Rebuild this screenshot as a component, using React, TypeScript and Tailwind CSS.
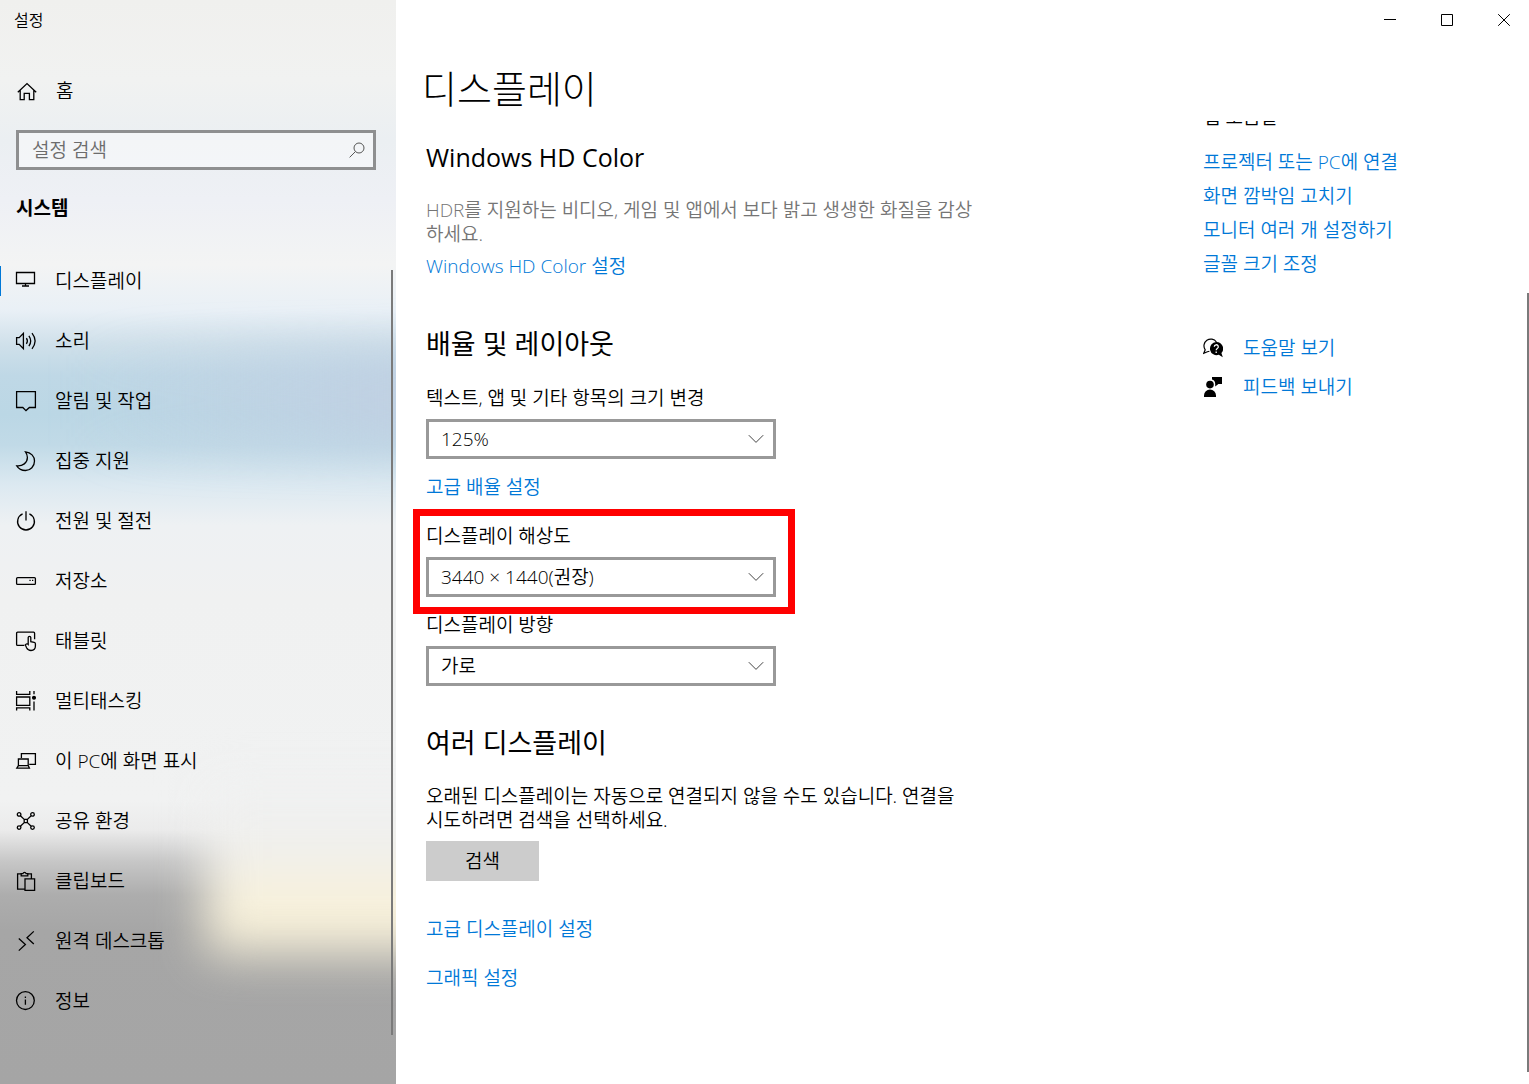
import type { ReactNode } from 'react';

interface NavItem { label: string; icon: ReactNode }

const NAV: NavItem[] = [
  {
    label: '디스플레이',
    icon: <path d="M.5 1.5h18v11H.5zM9.5 12.5v2M6 15h7" />,
  },
  {
    label: '소리',
    icon: <path d="M.6 6.6h2.6L7.4 2.4v15.2L3.2 13.4H.6zM10.4 7.2q2 2.8 0 5.6M12.9 4.8q3.6 5.2 0 10.4M16 2.2q6.2 7.8 0 15.6" />,
  },
  {
    label: '알림 및 작업',
    icon: <path d="M.6.6h18.8v15.9h-6L10 19.6l-3.2-3.1H.6z" />,
  },
  {
    label: '집중 지원',
    icon: <path d="M9.5.8C15 1.4 18.5 5.4 18.5 10c0 5.4-4 9.5-9 9.5-3.6 0-7-1.9-8.7-4.7C6.6 15.4 11.4 11.8 11.4 6.6c0-2.2-.7-4.1-1.9-5.8z" />,
  },
  {
    label: '전원 및 절전',
    icon: <path d="M10 .2v9.4M6.6 2.9a8.4 8.4 0 1 0 6.8 0" />,
  },
  {
    label: '저장소',
    icon: (
      <>
        <rect x=".6" y="6.6" width="18.8" height="6.8" rx="1" />
        <path d="M13.4 9.4h1.3M16 9.4h1.3" />
      </>
    ),
  },
  {
    label: '태블릿',
    icon: (
      <>
        <path d="M8.4 14.4H1.6a1 1 0 0 1-1-1V2.2a1 1 0 0 1 1-1h16a1 1 0 0 1 1 1v6" />
        <path d="M12.2 13.4V6.6a1.3 1.3 0 0 1 2.6 0v4l3.4.7a1.5 1.5 0 0 1 1.2 1.5v2.3c0 2.6-1.9 4.4-4.4 4.4-2.2 0-3.5-1-4.4-2.8l-1.3-2.8c.9-1.3 2.2-1.2 2.9-.5z" />
      </>
    ),
  },
  {
    label: '멀티태스킹',
    icon: (
      <>
        <path d="M.6 0v3.3h13.2V0M.6 6h13.2v8.4H.6zM.6 19.4v-2.6h13.2v2.6M18 0v3.2M18 10.4v9" />
        <circle cx="18" cy="6.8" r="1.4" fill="currentColor" />
      </>
    ),
  },
  {
    label: '이 PC에 화면 표시',
    icon: <path d="M5.4 7V2.6h14v10.8h-6.2M2.4 8h9.8v6.6H2.4zM2.4 14.6L.8 17.2h12.6l-1.2-2.6" />,
  },
  {
    label: '공유 환경',
    icon: (
      <>
        <circle cx="3.1" cy="3.4" r="1.8" />
        <circle cx="16.5" cy="3.4" r="1.8" />
        <circle cx="3.1" cy="16.6" r="1.8" />
        <circle cx="16.5" cy="16.6" r="1.8" />
        <path d="M8.2 8.4h3.2v3.2H8.2zM4.4 4.7l3.8 3.7M15.2 4.7l-3.8 3.7M4.4 15.3l3.8-3.7M15.2 15.3l-3.8-3.7" />
      </>
    ),
  },
  {
    label: '클립보드',
    icon: <path d="M8.4 18.2H1.6V2.8h3.6M11.8 2.8h3.6v4.6M5.2 4.8V2.6h1.7a1.7 1.7 0 0 1 3.2 0h1.7v2.2zM9 7.8h9.6v11.6H9z" />,
  },
  {
    label: '원격 데스크톱',
    icon: <path d="M2.8 7.4l6.6 6-6.6 6.2M17.8.4L11 6.8l6.8 6.2" />,
  },
  {
    label: '정보',
    icon: (
      <>
        <circle cx="9.4" cy="9.6" r="8.9" />
        <path d="M9.4 8.4v5.4M9.4 5.6v1.4" />
      </>
    ),
  },
];

const HELP_LINKS = [
  '프로젝터 또는 PC에 연결',
  '화면 깜박임 고치기',
  '모니터 여러 개 설정하기',
  '글꼴 크기 조정',
];

function Icon({ children }: { children: ReactNode }) {
  return (
    <svg
      viewBox="0 0 20 20"
      className="h-5 w-5 shrink-0 overflow-visible"
      fill="none"
      stroke="currentColor"
      strokeWidth="1.3"
      aria-hidden="true"
    >
      {children}
    </svg>
  );
}

function TextLink({ children, className = '' }: { children: ReactNode; className?: string }) {
  return (
    <a href="#" className={`block w-fit leading-6 text-[#0078d7] hover:text-gray-500 ${className}`}>
      {children}
    </a>
  );
}

interface SelectProps { id: string; label: string; value: string }

function SelectField({ id, label, value }: SelectProps) {
  return (
    <div className="flex w-[350px] flex-col gap-[9px]">
      <label htmlFor={id} className="leading-6">{label}</label>
      <div className="relative">
        <select
          id={id}
          defaultValue={value}
          className="block h-10 w-full appearance-none border-3 border-[#999999] bg-white px-3 outline-none"
        >
          <option>{value}</option>
        </select>
        <svg
          viewBox="0 0 16 10"
          className="pointer-events-none absolute top-[15px] right-3 h-[10px] w-4"
          fill="none"
          stroke="#444"
          strokeWidth="1"
          aria-hidden="true"
        >
          <path d="M.8 1.2L8 8.4l7.2-7.2" />
        </svg>
      </div>
    </div>
  );
}

// Blurred desktop showing through the side panel
function Backdrop() {
  return (
    <div className="absolute inset-0 -z-10 overflow-hidden bg-[linear-gradient(#f0f0ee_0px,#f1f2f1_80px,#ebeff2_140px,#eef0f5_200px,#f3f4f4_265px,#e9f0f6_310px,#cfe0ea_345px,#bfd8e6_375px,#bbd7e5_415px,#c1dae7_445px,#dce9f1_485px,#eef1f3_525px,#f0f1f1_600px,#f1f2f2_800px,#ebebeb_830px,#c6c6c6_862px,#adadad_895px,#a6a6a6_930px,#a5a5a5_1084px)]">
      <div className="absolute top-[355px] -right-16 h-[90px] w-[380px] bg-linear-to-r from-transparent to-[#c1cfe2] blur-xl" />
      <div className="absolute top-[785px] -right-16 h-[168px] w-[254px] bg-[linear-gradient(#f0f1f1_0px,#efefed_65px,#f8f1da_115px,#f6efd8_168px)] blur-xl" />
    </div>
  );
}

function Sidebar() {
  return (
    <aside className="relative isolate flex w-[396px] shrink-0 flex-col">
      <Backdrop />
      <div className="flex h-10 items-center pl-[14px] text-base">설정</div>

      <a href="#" className="mt-[26px] flex h-[50px] items-center gap-5 pl-4">
        <Icon>
          <path d="M1.8 11.2L11 2.6l9.2 8.6M4.2 9.4v9.2h4v-6.2h5.2v6.2h4.4V9.4" />
        </Icon>
        홈
      </a>

      <div className="relative mx-4 mt-[14px] mr-5">
        <input
          type="search"
          aria-label="설정 검색"
          placeholder="설정 검색"
          className="block h-10 w-full appearance-none border-3 border-[#8e8f90] bg-white/40 pr-10 pl-[13px] outline-none placeholder:text-[#6c6c6c]"
        />
        <svg
          viewBox="0 0 16 16"
          className="pointer-events-none absolute top-3 right-[11px] h-4 w-4"
          fill="none"
          stroke="#555"
          strokeWidth="1"
          aria-hidden="true"
        >
          <circle cx="10" cy="6" r="5" />
          <path d="M6.4 9.6L.6 15.4" />
        </svg>
      </div>

      <h2 className="mt-[23px] pl-4 leading-[30px] font-bold">시스템</h2>

      <div className="mt-7 flex">
        <nav className="flex-1">
          {NAV.map((item, i) => (
            <a key={item.label} href="#" className="flex h-[60px] items-center">
              <span className={i === 0 ? 'h-[30px] w-px bg-[#0078d7]' : 'w-px'} />
              <span className="flex items-center gap-[19px] pl-[15px]">
                <Icon>{item.icon}</Icon>
                {item.label}
              </span>
            </a>
          ))}
        </nav>
        <div className="mt-[19px] mr-[3px] -mb-1 w-[2px] bg-[#7a7a7a]" />
      </div>
    </aside>
  );
}

function WindowControls() {
  return (
    <div className="flex h-10 justify-end gap-[7px]">
      <button type="button" aria-label="최소화" className="flex w-[50px] items-center justify-center">
        <svg viewBox="0 0 12 12" className="h-3 w-3" stroke="#000" aria-hidden="true">
          <path d="M0 5.5h12" />
        </svg>
      </button>
      <button type="button" aria-label="최대화" className="flex w-[50px] items-center justify-center">
        <svg viewBox="0 0 12 12" className="h-3 w-3" fill="none" stroke="#000" aria-hidden="true">
          <path d="M.5.5h11v11H.5z" />
        </svg>
      </button>
      <button type="button" aria-label="닫기" className="flex w-[50px] items-center justify-center">
        <svg viewBox="0 0 12 12" className="h-3 w-3" stroke="#000" aria-hidden="true">
          <path d="M.2.2l11.6 11.6M11.8.2L.2 11.8" />
        </svg>
      </button>
    </div>
  );
}

function RelatedLinks() {
  return (
    <aside className="w-[324px] shrink-0">
      {/* heading is scrolled almost out of view */}
      <div className="flex h-[6px] items-end overflow-hidden">
        <h2 className="leading-5">앱 도움말</h2>
      </div>
      <ul className="mt-[18px]">
        {HELP_LINKS.map(text => (
          <li key={text} className="flex h-[34px] items-center">
            <TextLink>{text}</TextLink>
          </li>
        ))}
      </ul>
      <ul className="mt-[47px]">
        <li className="flex h-[39px] items-center gap-5">
          <svg viewBox="0 0 20 20" className="h-5 w-5" aria-hidden="true">
            <path
              d="M6.4 13.2l-2 .6-3.6 1.4 1.4-3.4A6.4 6.4 0 1 1 13.4 4"
              fill="none"
              stroke="#000"
              strokeWidth="1.2"
            />
            <path d="M13.2 4a6.6 6.6 0 1 0 2.6 12.8l4 2.4-1.4-4.2A6.6 6.6 0 0 0 13.2 4z" fill="#000" />
            <path
              d="M11.3 8.8a2 2 0 1 1 3 1.7c-.8.5-1.1.8-1.1 1.7M13.2 13.4v1.5"
              fill="none"
              stroke="#fff"
              strokeWidth="1.3"
            />
          </svg>
          <TextLink>도움말 보기</TextLink>
        </li>
        <li className="flex h-[39px] items-center gap-5">
          <svg viewBox="0 0 20 20" className="h-5 w-5" aria-hidden="true">
            <circle cx="7" cy="7.6" r="3.8" />
            <path d="M1 20v-1.6a6 6 0 0 1 12 0V20zM9 0h10v7h-3.6l-3.2 2.4V7C12.2 4.6 11 3 9 2.6z" />
          </svg>
          <TextLink>피드백 보내기</TextLink>
        </li>
      </ul>
    </aside>
  );
}

export default function App() {
  return (
    <div className="flex min-h-screen bg-white font-['Open_Sans','Noto_Sans_CJK_KR',sans-serif] text-[19px] font-[350] text-black">
      <Sidebar />

      <div className="flex min-w-0 flex-1 flex-col">
        <WindowControls />
        <h1 className="mt-[23px] pl-[26px] text-[38px] leading-[50px] font-light">디스플레이</h1>

        <div className="mt-2 flex flex-1">
          <main className="flex-1 pt-[18px] pr-8 pb-6 pl-[30px]">
            <section>
              <h2 className="text-[25px] leading-9 font-normal">Windows HD Color</h2>
              <p className="mt-[23px] max-w-[560px] leading-6 break-all text-[#757575]">
                HDR를 지원하는 비디오, 게임 및 앱에서 보다 밝고 생생한 화질을 감상하세요.
              </p>
              <TextLink className="mt-2">Windows HD Color 설정</TextLink>
            </section>

            <section className="mt-12">
              <h2 className="mb-6 text-[27px] leading-9 font-normal">배율 및 레이아웃</h2>
              <SelectField id="scale" label="텍스트, 앱 및 기타 항목의 크기 변경" value="125%" />
              <TextLink className="mt-4 mb-[25px]">고급 배율 설정</TextLink>
              <div className="relative mb-4 w-fit">
                <SelectField id="resolution" label="디스플레이 해상도" value="3440 × 1440(권장)" />
                <div className="pointer-events-none absolute -top-[15px] -right-[19px] -bottom-[17px] -left-[13px] border-7 border-[#ff0000]" />
              </div>
              <SelectField id="orientation" label="디스플레이 방향" value="가로" />
            </section>

            <section className="mt-[39px]">
              <h2 className="text-[27px] leading-9 font-normal">여러 디스플레이</h2>
              <p className="mt-[23px] max-w-[560px] leading-6 break-keep">
                오래된 디스플레이는 자동으로 연결되지 않을 수도 있습니다. 연결을 시도하려면 검색을 선택하세요.
              </p>
              <button type="button" className="mt-[9px] h-10 w-[113px] bg-[#cccccc]">검색</button>
              <TextLink className="mt-9">고급 디스플레이 설정</TextLink>
              <TextLink className="mt-[25px]">그래픽 설정</TextLink>
            </section>
          </main>

          <RelatedLinks />
          <div className="mt-[172px] mb-3 w-[2px] shrink-0 bg-[#7a7a7a]" />
        </div>
      </div>
    </div>
  );
}
